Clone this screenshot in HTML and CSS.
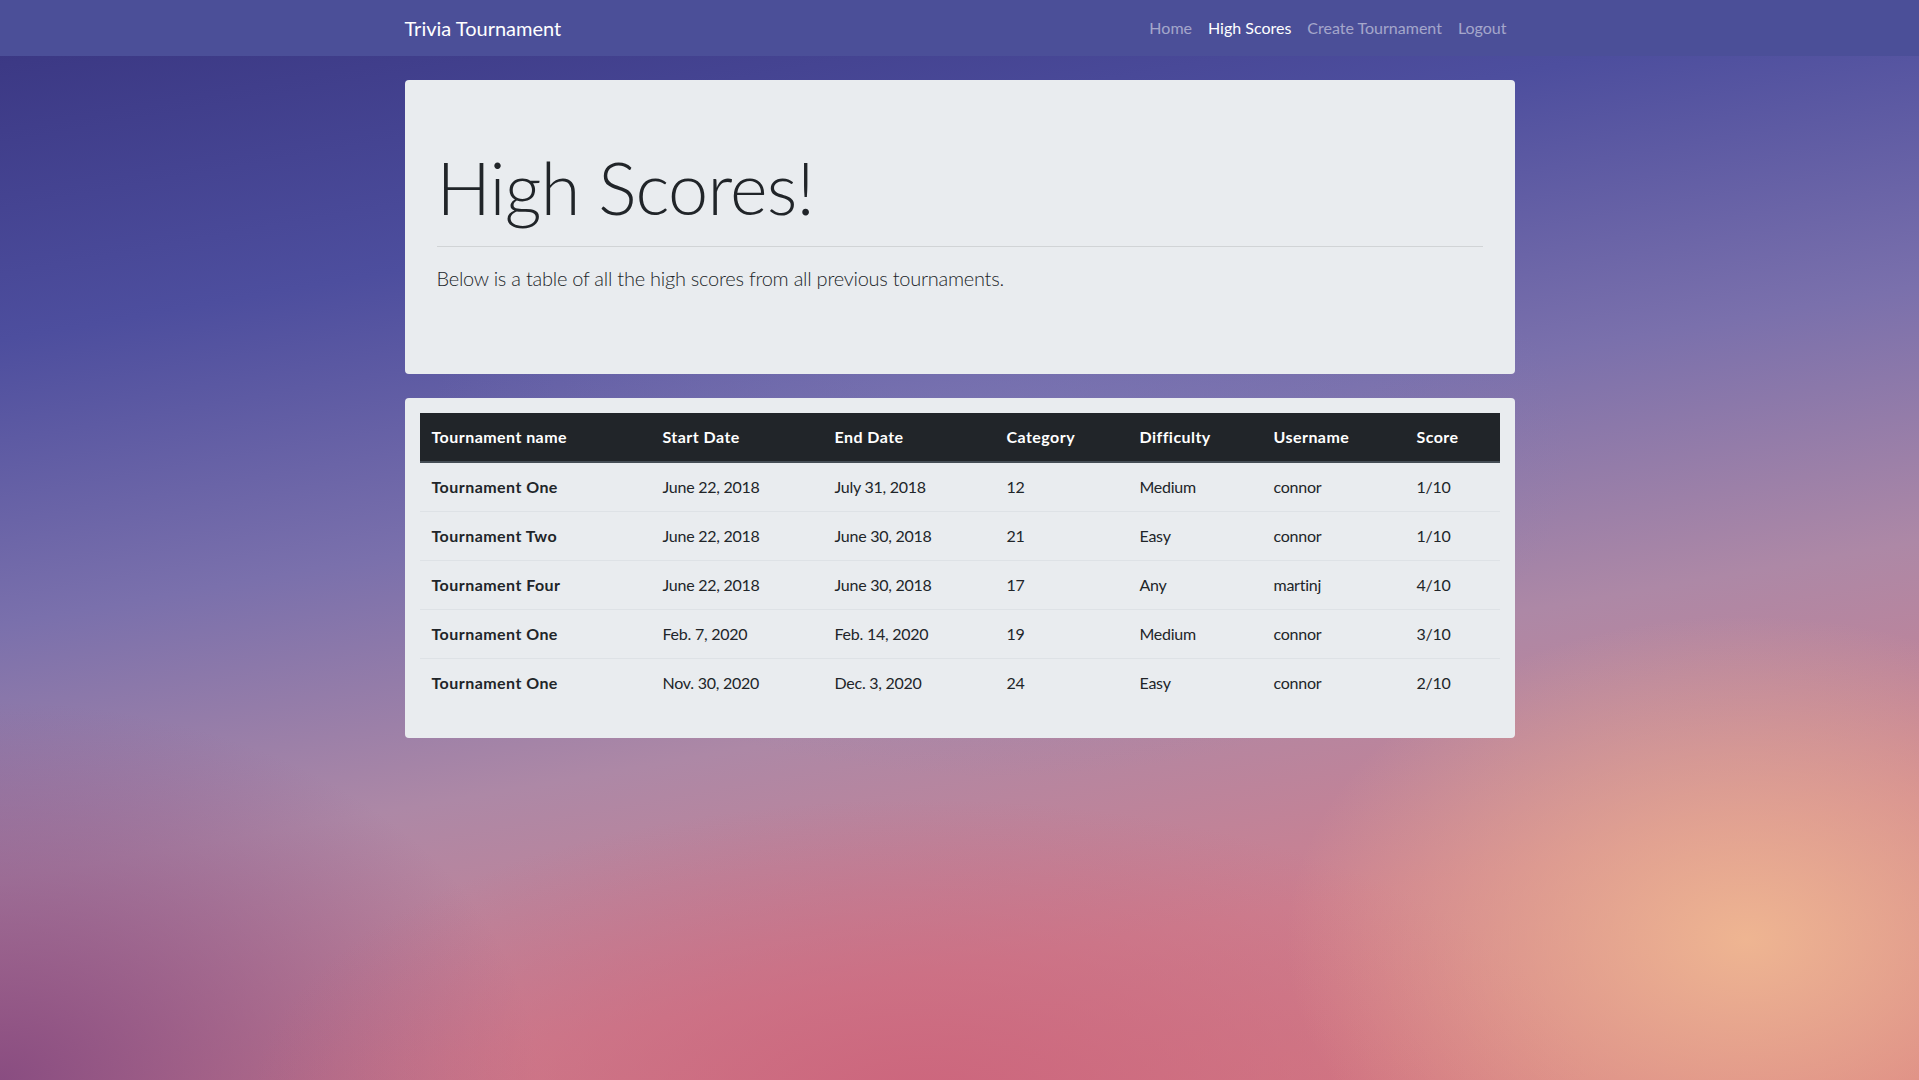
FILE: index.html
```html
<!DOCTYPE html>
<html lang="en">
<head>
<meta charset="utf-8">
<title>High Scores - Trivia Tournament</title>
<link rel="stylesheet" href="styles.css">
</head>
<body>
<nav class="navbar">
  <div class="container nav-inner">
    <a class="brand" href="#">Trivia Tournament</a>
    <ul class="nav-links">
      <li><a class="nav-link" href="#">Home</a></li>
      <li><a class="nav-link active" href="#">High Scores</a></li>
      <li><a class="nav-link" href="#">Create Tournament</a></li>
      <li><a class="nav-link" href="#">Logout</a></li>
    </ul>
  </div>
</nav>
<main class="container main">
  <section class="jumbotron">
    <h1 class="display">High Scores!</h1>
    <hr class="divider">
    <p class="lead">Below is a table of all the high scores from all previous tournaments.</p>
  </section>
  <section class="table-card">
    <table class="scores">
      <thead>
        <tr>
          <th class="c-name">Tournament name</th>
          <th class="c-start">Start Date</th>
          <th class="c-end">End Date</th>
          <th class="c-cat">Category</th>
          <th class="c-diff">Difficulty</th>
          <th class="c-user">Username</th>
          <th class="c-score">Score</th>
        </tr>
      </thead>
      <tbody>
        <tr><th scope="row">Tournament One</th><td>June 22, 2018</td><td>July 31, 2018</td><td>12</td><td>Medium</td><td>connor</td><td>1/10</td></tr>
        <tr><th scope="row">Tournament Two</th><td>June 22, 2018</td><td>June 30, 2018</td><td>21</td><td>Easy</td><td>connor</td><td>1/10</td></tr>
        <tr><th scope="row">Tournament Four</th><td>June 22, 2018</td><td>June 30, 2018</td><td>17</td><td>Any</td><td>martinj</td><td>4/10</td></tr>
        <tr><th scope="row">Tournament One</th><td>Feb. 7, 2020</td><td>Feb. 14, 2020</td><td>19</td><td>Medium</td><td>connor</td><td>3/10</td></tr>
        <tr><th scope="row">Tournament One</th><td>Nov. 30, 2020</td><td>Dec. 3, 2020</td><td>24</td><td>Easy</td><td>connor</td><td>2/10</td></tr>
      </tbody>
    </table>
  </section>
</main>
</body>
</html>
```
FILE: styles.css
```css
* { box-sizing: border-box; }
html, body { height: 100%; }
body {
  margin: 0;
  font-family: Lato, "Open Sans", "Liberation Sans", sans-serif;
  font-size: 16px;
  line-height: 1.5;
  color: #212529;
  min-height: 1080px;
  background-color: #7a5e98;
  background-image:
    radial-gradient(ellipse 24% 30% at 91% 87%, rgba(240,184,146,0.95), rgba(240,184,146,0) 100%),
    radial-gradient(ellipse 35% 28% at 48% 102%, rgba(204,100,124,0.95), rgba(204,100,124,0) 100%),
    radial-gradient(ellipse 28% 35% at 0% 100%, rgba(134,74,128,0.95), rgba(134,74,128,0) 100%),
    radial-gradient(ellipse 30% 30% at 52% 42%, rgba(128,124,184,0.5), rgba(128,124,184,0) 100%),
    linear-gradient(170deg, #38347f 0%, #4d4e9e 24%, #7a70ac 44%, #ad88a6 62%, #cc8090 80%, #d67a80 100%);
}
a { text-decoration: none; }
.container {
  width: 1140px;
  margin: 0 auto;
  padding: 0 15px;
}
.navbar {
  background: #4b4f98;
  padding: 8px 0;
}
.nav-inner {
  display: flex;
  align-items: center;
  justify-content: space-between;
}
.brand {
  color: #fff;
  font-size: 20px;
  line-height: 30px;
  padding: 5px 0;
}
.nav-links {
  list-style: none;
  margin: 0;
  padding: 0;
  display: flex;
}
.nav-link {
  display: block;
  padding: 8px 8px;
  color: rgba(255,255,255,0.5);
  line-height: 24px;
}
.nav-link.active { color: #fff; }
.main { padding-top: 24px; }
.jumbotron {
  background: #e9ecef;
  border-radius: 4px;
  padding: 64px 32px 65px;
  margin-bottom: 24px;
}
.display {
  font-size: 72px;
  font-weight: 300;
  line-height: 1.2;
  letter-spacing: -0.8px;
  margin: 0;
  color: #212529;
}
.divider {
  margin: 16px 0;
  border: 0;
  border-top: 1px solid rgba(0,0,0,0.1);
}
.lead {
  font-size: 20px;
  line-height: 30px;
  font-weight: 300;
  letter-spacing: -0.25px;
  margin: 0 0 16px;
  color: #212529;
}
.table-card {
  background: #e9ecef;
  border-radius: 4px;
  padding: 15px;
}
.scores {
  width: 100%;
  border-collapse: collapse;
  margin-bottom: 16px;
  text-align: left;
}
.scores th, .scores td {
  padding: 12px;
  vertical-align: top;
  border-top: 1px solid #dee2e6;
}
.scores td { letter-spacing: -0.25px; }
.scores th { letter-spacing: 0.45px; }
.scores thead th {
  background: #212529;
  color: #fff;
  border-top: 0;
  border-bottom: 2px solid #454d55;
  font-weight: 700;
}
.scores tbody tr:first-child th, .scores tbody tr:first-child td { border-top: 0; }
.scores tbody th { font-weight: 700; }
.c-name { width: 231px; }
.c-start { width: 172px; }
.c-end { width: 172px; }
.c-cat { width: 133px; }
.c-diff { width: 134px; }
.c-user { width: 143px; }
.c-score { width: 95px; }
```
